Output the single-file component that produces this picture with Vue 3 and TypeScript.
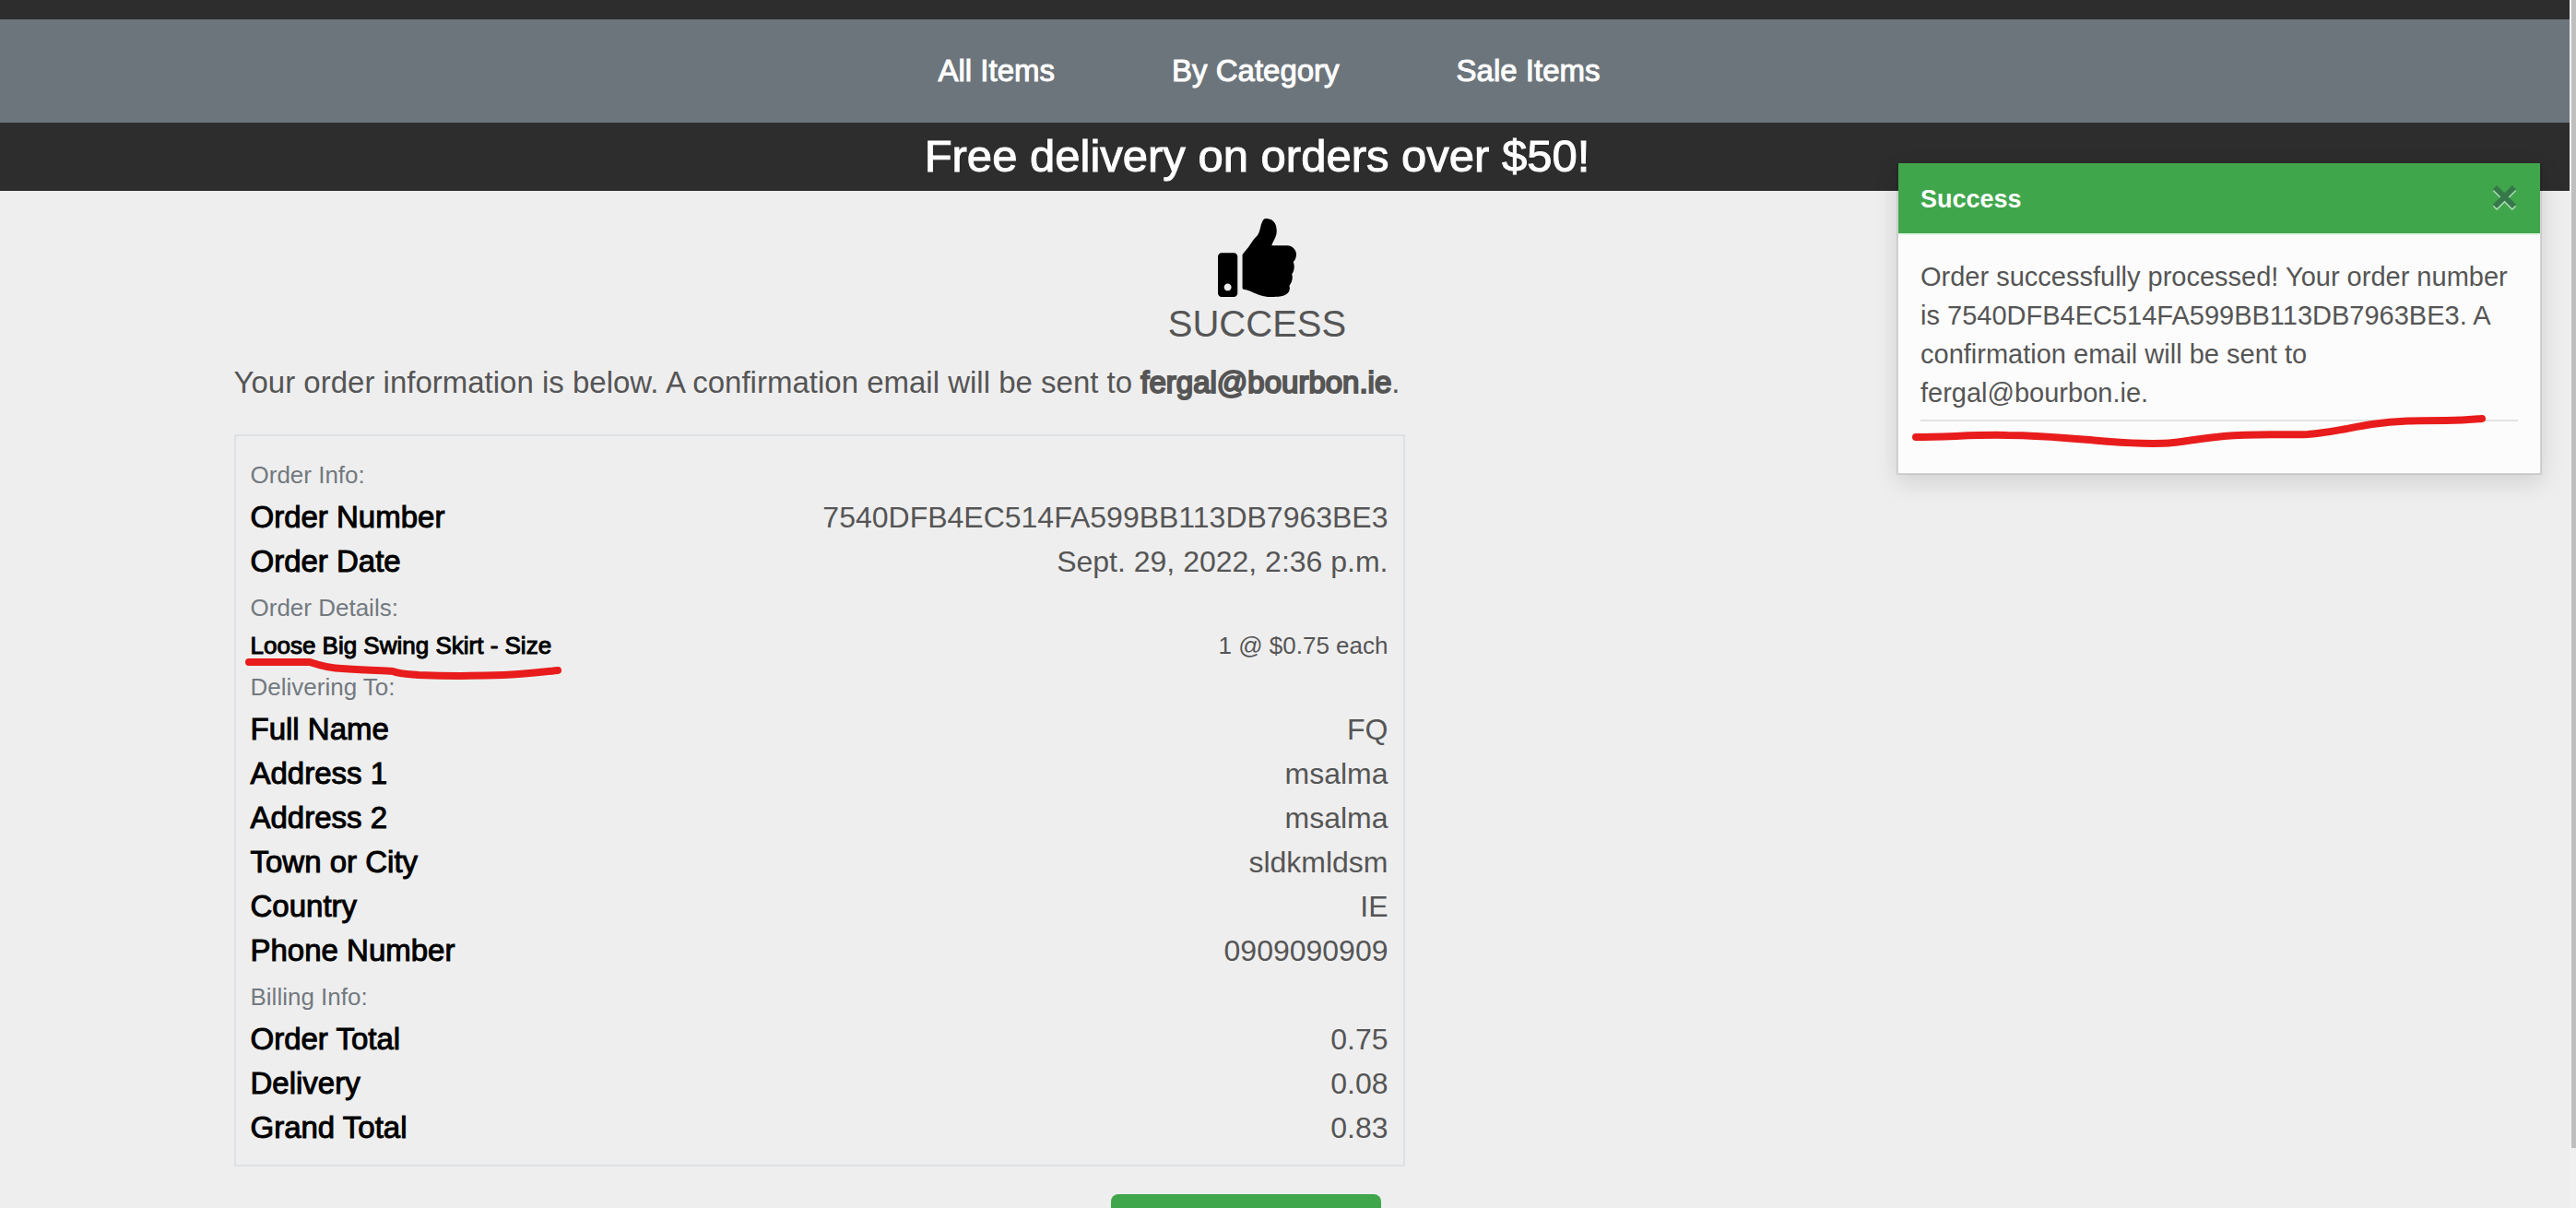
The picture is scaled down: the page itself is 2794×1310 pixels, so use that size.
<script setup lang="ts">
import { ref } from 'vue'

interface Row {
  label: string
  value: string
  small?: boolean
}

interface Section {
  title: string
  rows: Row[]
}

const orderNumber = '7540DFB4EC514FA599BB113DB7963BE3'
const email = 'fergal@bourbon.ie'
const links: string[] = ['All Items', 'By Category', 'Sale Items']
const toastOpen = ref(true)

const sections: Section[] = [
  {
    title: 'Order Info:',
    rows: [
      { label: 'Order Number', value: orderNumber },
      { label: 'Order Date', value: 'Sept. 29, 2022, 2:36 p.m.' },
    ],
  },
  {
    title: 'Order Details:',
    rows: [{ label: 'Loose Big Swing Skirt - Size', value: '1 @ $0.75 each', small: true }],
  },
  {
    title: 'Delivering To:',
    rows: [
      { label: 'Full Name', value: 'FQ' },
      { label: 'Address 1', value: 'msalma' },
      { label: 'Address 2', value: 'msalma' },
      { label: 'Town or City', value: 'sldkmldsm' },
      { label: 'Country', value: 'IE' },
      { label: 'Phone Number', value: '0909090909' },
    ],
  },
  {
    title: 'Billing Info:',
    rows: [
      { label: 'Order Total', value: '0.75' },
      { label: 'Delivery', value: '0.08' },
      { label: 'Grand Total', value: '0.83' },
    ],
  },
]
</script>

<template>
  <div class="window">
    <div class="page">
      <header>
        <div class="strip"></div>
        <nav class="nav">
          <a v-for="link in links" :key="link" href="#">{{ link }}</a>
        </nav>
        <div class="banner">
          <div class="container">
            <h4>Free delivery on orders over $50!</h4>
          </div>
        </div>
      </header>

      <main class="container">
        <div class="heading">
          <svg class="thumb" viewBox="0 0 512 512" aria-hidden="true">
            <path d="M104 224H24c-13.255 0-24 10.745-24 24v240c0 13.255 10.745 24 24 24h80c13.255 0 24-10.745 24-24V248c0-13.255-10.745-24-24-24zM64 472c-13.255 0-24-10.745-24-24s10.745-24 24-24 24 10.745 24 24-10.745 24-24 24zM384 81.452c0 42.416-25.97 66.208-33.277 94.548h101.723c33.397 0 59.397 27.746 59.553 58.098.084 17.938-7.546 37.249-19.439 49.197l-.11.11c9.836 23.337 8.237 56.037-9.308 79.469 8.681 25.895-.069 57.704-16.382 74.757 4.298 17.598 2.244 32.575-6.148 44.632C440.202 511.587 389.616 512 346.839 512l-2.845-.001c-48.287-.017-87.806-17.598-119.56-31.725-15.957-7.099-36.821-15.887-52.651-16.178-6.54-.12-11.783-5.457-11.783-11.998v-213.77c0-3.2 1.282-6.271 3.558-8.521 39.614-39.144 56.648-80.587 89.117-113.111 14.804-14.832 20.188-37.236 25.393-58.902C282.515 39.293 291.817 0 312 0c24 0 72 8 72 81.452z" />
          </svg>
          <h2>SUCCESS</h2>
        </div>

        <div class="column">
          <p class="intro">
            Your order information is below. A confirmation email will be sent to
            <strong>{{ email }}</strong>.
          </p>

          <div class="panel">
            <section v-for="section in sections" :key="section.title">
              <h3>{{ section.title }}</h3>
              <dl>
                <div v-for="row in section.rows" :key="row.label" class="row" :class="{ small: row.small }">
                  <dt>{{ row.label }}</dt>
                  <dd>{{ row.value }}</dd>
                  <svg v-if="row.small" class="mark item-mark" viewBox="0 0 350 30" aria-hidden="true">
                    <path d="M6 5H72C84 9 95 12 107 12C130 14 152 14 162 15C170 18 178 18 190 19C215 20 255 20 282 19C305 18 320 16 341 14" />
                  </svg>
                </div>
              </dl>
            </section>
          </div>

          <div class="actions">
            <button type="button" class="shop" aria-label="Keep shopping"></button>
          </div>
        </div>
      </main>

      <aside v-if="toastOpen" class="toast" role="status">
        <div class="toast-head">
          <strong>Success</strong>
          <button type="button" class="close" aria-label="Close" @click="toastOpen = false">
            <svg viewBox="0 0 25 27" aria-hidden="true">
              <path class="light" d="M2 4L23 25M23 4L2 25" />
              <path class="dark" d="M2 2L23 23M23 2L2 23" />
            </svg>
          </button>
        </div>
        <div class="toast-body">
          <p>
            Order successfully processed! Your order number is {{ orderNumber }}. A confirmation email
            will be sent to {{ email }}.
          </p>
          <hr />
          <svg class="mark toast-mark" viewBox="0 0 632 44" aria-hidden="true">
            <path d="M7 29C40 29 75 26 106 27C140 27 170 30 206 33C230 35 265 37 286 35C305 33 320 30 341 28C375 25 400 27 432 26C460 24 480 18 502 15C530 11 550 11 582 11C602 11 610 10 621 9" />
          </svg>
        </div>
      </aside>
    </div>
    <div class="scrollbar"><div class="thumb-bar"></div></div>
  </div>
</template>

<style>
body {
  margin: 0;
  background: #eeeeee;
  overflow: hidden;
}
</style>

<style scoped>
.window {
  display: flex;
  height: 100vh;
  overflow: hidden;
  color: #555555;
  font: 32px/48px "Liberation Sans", Arial, sans-serif;
}

.page {
  position: relative;
  flex: 1;
  min-width: 0;
  height: 100%;
  overflow: hidden;
}

h2,
h3,
h4,
p,
dl,
dd {
  margin: 0;
  font-weight: 400;
}

.strip {
  height: 21px;
  background: #2d2d2d;
}

.nav {
  display: flex;
  justify-content: center;
  gap: 127px;
  padding: 32px 34px 32px 0;
  background: #6c757b;
}

.nav a {
  color: #ffffff;
  font-size: 33px;
  text-decoration: none;
  -webkit-text-stroke: 1px currentColor;
}

.banner {
  padding: 8px 0 10px;
  background: #2d2d2d;
}

.container {
  box-sizing: border-box;
  max-width: 2340px;
  margin: 0 auto;
  padding-right: 60px;
}

.banner h4 {
  color: #ffffff;
  font-size: 49px;
  line-height: 56px;
  text-align: center;
  -webkit-text-stroke: 1px currentColor;
}

.heading {
  display: flex;
  flex-direction: column;
  align-items: center;
  gap: 5px;
  padding-top: 30px;
  margin-bottom: 16px;
}

.thumb {
  display: block;
  width: 85px;
  height: 85px;
  fill: #000000;
}

.heading h2 {
  font-size: 40px;
}

.column {
  box-sizing: border-box;
  width: calc(100% * 7 / 12);
  padding: 0 30px;
}

.intro {
  margin-bottom: 32px;
  font-size: 33px;
}

.intro strong {
  font-weight: 400;
  -webkit-text-stroke: 2px currentColor;
}

.panel {
  padding: 16px;
  border: 2px solid #dee1e4;
}

.panel h3 {
  padding-top: 4px;
  color: #72797f;
  font-size: 26px;
  line-height: 44px;
}

.row {
  position: relative;
  display: flex;
  justify-content: space-between;
}

.row dt {
  color: #000000;
  font-size: 33px;
  -webkit-text-stroke: 1px currentColor;
}

.row.small,
.row.small dt {
  font-size: 26px;
  line-height: 38px;
}

.mark {
  position: absolute;
  z-index: 1;
  fill: none;
  stroke: #e81c1c;
  stroke-width: 8px;
  stroke-linecap: round;
  stroke-linejoin: round;
  pointer-events: none;
}

.item-mark {
  top: 32px;
  left: -8px;
  width: 350px;
  height: 30px;
}

.actions {
  display: flex;
  justify-content: flex-end;
  padding: 30px 26px 0 0;
}

.shop {
  width: 293px;
  height: 76px;
  border: 0;
  border-radius: 8px;
  background: #40a64c;
}

.toast {
  position: absolute;
  top: 177px;
  right: 30px;
  box-sizing: border-box;
  width: 700px;
  border: 2px solid rgba(0, 0, 0, 0.1);
  border-top: 0;
  background: #fcfcfc;
  background-clip: padding-box;
  box-shadow: 0 8px 24px rgba(0, 0, 0, 0.12);
  font-size: 29px;
  line-height: 42px;
}

.toast-head {
  display: flex;
  align-items: center;
  justify-content: space-between;
  padding: 18px 24px 16px;
  border-bottom: 2px solid #e2f5e4;
  background: #40a64c;
  background-clip: padding-box;
  color: #ffffff;
}

.toast-head strong {
  font-size: 27px;
  font-weight: 700;
}

.close {
  display: flex;
  padding: 0 2px 4px 0;
  border: 0;
  background: none;
  cursor: pointer;
}

.close svg {
  width: 25px;
  height: 27px;
  fill: none;
  stroke-width: 6px;
}

.light {
  stroke: #b3dcb8;
}

.dark {
  stroke: #37784a;
}

.toast-body {
  position: relative;
  padding: 24px 24px 56px;
}

.toast-body hr {
  height: 2px;
  margin: 8px 0 0;
  border: 0;
  background: #e2e2e2;
}

.toast-mark {
  top: 190px;
  left: 12px;
  width: 632px;
  height: 44px;
}

.scrollbar {
  box-sizing: border-box;
  width: 7px;
  padding-left: 2px;
  background: #f1f1f1;
}

.thumb-bar {
  height: 95%;
  background: #bfbfbf;
}
</style>
